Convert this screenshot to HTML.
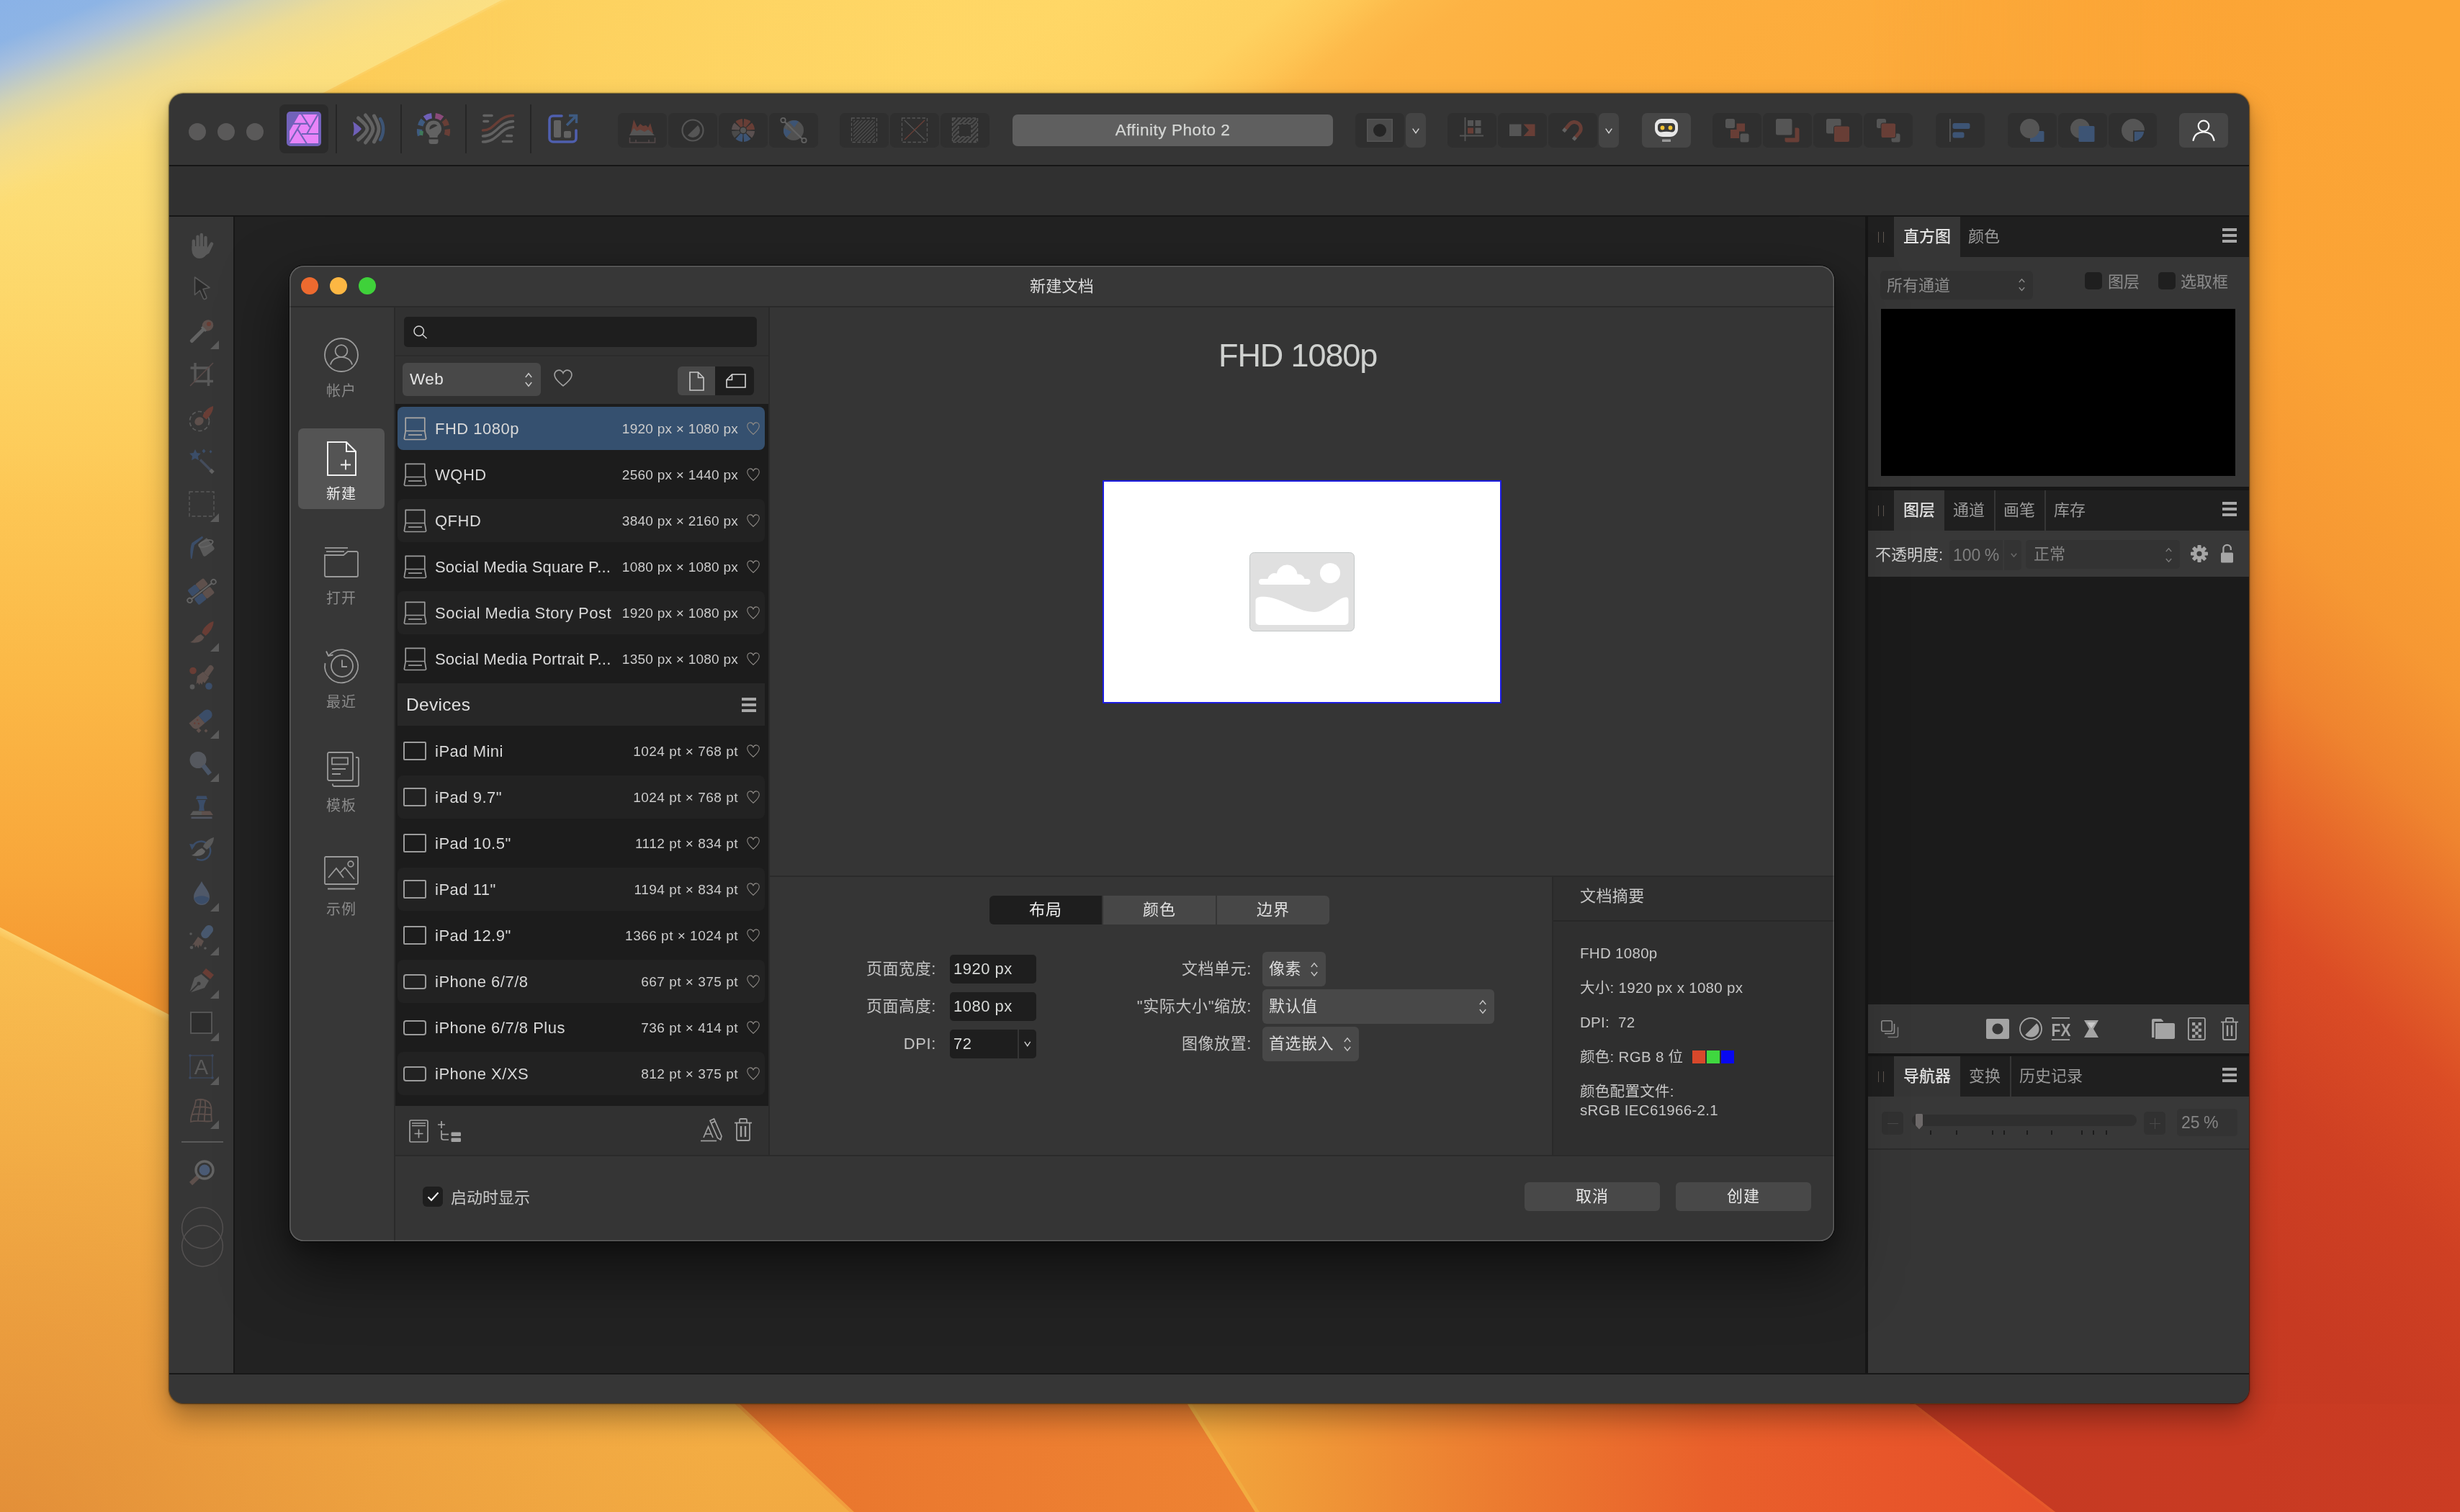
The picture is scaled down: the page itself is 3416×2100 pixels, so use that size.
<!DOCTYPE html>
<html lang="zh-CN"><head><meta charset="utf-8"><title>Affinity Photo 2 - 新建文档</title>
<style>
*{box-sizing:border-box;margin:0;padding:0}
html,body{width:3416px;height:2100px;overflow:hidden;background:#f6a638}
body{position:relative;font-family:"Liberation Sans","Noto Sans CJK SC",sans-serif;color:#ddd;-webkit-font-smoothing:antialiased}
.a{position:absolute}
.t{position:absolute;white-space:nowrap;line-height:1}
#root{position:absolute;left:0;top:0;width:3416px;height:2100px;will-change:transform;transform:translateZ(0)}
svg{position:absolute;overflow:visible}
.cj{font-family:"Liberation Sans","Noto Sans CJK SC",sans-serif}

#win{position:absolute;left:235px;top:130px;width:2888px;height:1819px;border-radius:20px;overflow:hidden;background:#353535}
#winsh{position:absolute;left:235px;top:130px;width:2888px;height:1819px;border-radius:20px;
 box-shadow:0 0 1.5px .5px rgba(0,0,0,.55),0 20px 38px 0 rgba(0,0,0,.33),0 3px 10px rgba(0,0,0,.16)}
#pg{position:absolute;left:-235px;top:-130px;width:3416px;height:2100px}
.tb{position:absolute;top:157px;height:48px;width:68px;background:#2f2f2f;border-radius:7px}

.tbd{position:absolute;top:157px;height:48px;width:28px;background:#444444;border-radius:7px}
.vsep{position:absolute;top:145px;width:2px;height:68px;background:#262626}

#dlgsh{position:absolute;left:402px;top:369px;width:2145px;height:1355px;border-radius:20px;
 box-shadow:0 0 0 1px rgba(0,0,0,.7),0 38px 84px 6px rgba(0,0,0,.5),0 10px 26px rgba(0,0,0,.26)}
#dlg{position:absolute;left:402px;top:369px;width:2145px;height:1355px;border-radius:20px;overflow:hidden;background:#353535}
#dpg{position:absolute;left:-402px;top:-369px;width:3416px;height:2100px}
#dlgbd{position:absolute;left:402px;top:369px;width:2145px;height:1355px;border-radius:20px;box-shadow:inset 0 0 0 1.5px rgba(255,255,255,.2);pointer-events:none}
.row{position:absolute;left:552px;width:510px;height:60px;border-radius:8px}
.rowalt{background:#222222}
.rl{position:absolute;left:604px;font-size:22px;letter-spacing:.5px;color:#d9d9d9;white-space:nowrap;line-height:61px;height:60px}
.rd{position:absolute;right:2391px;font-size:19px;letter-spacing:.25px;color:#cccccc;white-space:nowrap;line-height:61px;height:60px;text-align:right}
.sbl{position:absolute;left:414px;width:120px;text-align:center;font-size:20px;color:#8a8a8a;line-height:30px;height:30px;letter-spacing:1px}
.fl{position:absolute;font-size:22px;color:#c4c4c4;white-space:nowrap;text-align:right;line-height:40px;height:40px;letter-spacing:.6px}
.inp{position:absolute;left:1319px;width:120px;height:40px;border-radius:5px;background:#1e1e1e}
.it{position:absolute;left:1324px;font-size:22px;letter-spacing:.5px;color:#d9dbd9;white-space:nowrap;line-height:40px;height:40px}
.dd{position:absolute;left:1753px;height:48px;border-radius:6px;background:#484848}
.ddt{position:absolute;left:1762px;font-size:22px;color:#dcdcdc;white-space:nowrap;line-height:48px;height:48px;letter-spacing:.5px}
.seg{position:absolute;top:1244px;width:156px;height:40px;line-height:40px;text-align:center;font-size:22px;color:#e0e0e0;letter-spacing:1px}
.sm{position:absolute;left:2194px;font-size:20.5px;color:#c6c6c6;white-space:nowrap;line-height:28px;height:28px;letter-spacing:.3px}
.btn{position:absolute;top:1642px;width:188px;height:40px;border-radius:6px;background:#484848;text-align:center;line-height:40px;font-size:22px;color:#e6e6e6;letter-spacing:1px}

.rp{position:absolute;left:2594px;width:529px}
.rtab{position:absolute;height:56px;line-height:56px;font-size:22px;color:#9a9a9a;white-space:nowrap}
.rtabA{background:#363636;color:#e6e6e6;font-weight:500;text-align:center;color:#e2e2e2}
.ham{position:absolute;width:20px;height:20px}
.ham i{position:absolute;left:0;width:20px;height:4px;background:#a8a8a8}
.grip{position:absolute;width:8px;height:15px;margin-top:5px;border-left:1.5px solid #5e5650;border-right:1.5px solid #5e5650}
.g22{position:absolute;font-size:22px;color:#8c8c8c;white-space:nowrap;line-height:40px;height:40px}
.tsep{position:absolute;width:2px;height:56px;background:#363636}
</style></head>
<body>
<div id="root">

<svg class="a" style="left:0;top:0" width="3416" height="2100" viewBox="0 0 3416 2100">
<defs>
 <linearGradient id="wTop" x1="0" y1="65" x2="1348" y2="1735" gradientUnits="userSpaceOnUse">
  <stop offset="0" stop-color="#fbdd78"/><stop offset="0.117" stop-color="#fdd96a"/>
  <stop offset="0.41" stop-color="#ffd766"/><stop offset="0.50" stop-color="#fed160"/>
  <stop offset="0.527" stop-color="#fec655"/><stop offset="0.547" stop-color="#fdba4a"/>
  <stop offset="0.574" stop-color="#fdb344"/><stop offset="0.66" stop-color="#fdae3e"/>
  <stop offset="0.82" stop-color="#fcaa3a"/><stop offset="1" stop-color="#fca636"/>
 </linearGradient>
 <linearGradient id="wLeft" x1="0" y1="0" x2="0" y2="2100" gradientUnits="userSpaceOnUse">
  <stop offset="0" stop-color="#fdda6c"/><stop offset="0.14" stop-color="#fdd868"/>
  <stop offset="0.30" stop-color="#fdca58"/><stop offset="0.45" stop-color="#fbb846"/>
  <stop offset="0.58" stop-color="#f8a63a"/><stop offset="0.66" stop-color="#f4962f"/>
  <stop offset="1" stop-color="#f3952e"/>
 </linearGradient>
 <linearGradient id="wLeftFade" x1="0" y1="0" x2="700" y2="0" gradientUnits="userSpaceOnUse">
  <stop offset="0" stop-color="#fff" stop-opacity="1"/><stop offset="0.5" stop-color="#fff" stop-opacity="1"/>
  <stop offset="1" stop-color="#fff" stop-opacity="0"/>
 </linearGradient>
 <mask id="mLeft"><rect x="0" y="0" width="700" height="2100" fill="url(#wLeftFade)"/></mask>
 <linearGradient id="wRight" x1="4222" y1="368" x2="2794" y2="1901" gradientUnits="userSpaceOnUse">
  <stop offset="0" stop-color="#fca636"/><stop offset="0.178" stop-color="#fca636"/><stop offset="0.36" stop-color="#fba335"/>
  <stop offset="0.47" stop-color="#f69833"/><stop offset="0.543" stop-color="#ef842f"/>
  <stop offset="0.601" stop-color="#e6682a"/><stop offset="0.667" stop-color="#db4c25"/>
  <stop offset="0.747" stop-color="#cf4023"/><stop offset="0.849" stop-color="#c73a22"/>
  <stop offset="1" stop-color="#c63922"/>
 </linearGradient>
 <linearGradient id="wRightFade" x1="2600" y1="0" x2="3100" y2="0" gradientUnits="userSpaceOnUse">
  <stop offset="0" stop-color="#fff" stop-opacity="0"/><stop offset="1" stop-color="#fff" stop-opacity="1"/>
 </linearGradient>
 <mask id="mRight"><rect x="2600" y="0" width="816" height="2100" fill="url(#wRightFade)"/></mask>
 <linearGradient id="wBlue" x1="0" y1="0" x2="101" y2="251" gradientUnits="userSpaceOnUse">
  <stop offset="0" stop-color="#8ab2e7"/><stop offset="0.2" stop-color="#8db4e5"/>
  <stop offset="0.33" stop-color="#a9c0dc"/><stop offset="0.5" stop-color="#d3d3b2"/>
  <stop offset="0.65" stop-color="#ecdb96" stop-opacity="0.95"/><stop offset="0.85" stop-color="#f8de86" stop-opacity="0.7"/>
  <stop offset="1" stop-color="#fbdf7e" stop-opacity="0"/>
 </linearGradient>
 <linearGradient id="wGold" x1="450" y1="0" x2="1500" y2="0" gradientUnits="userSpaceOnUse">
  <stop offset="0" stop-color="#fbbd44" stop-opacity="0.5"/><stop offset="0.5" stop-color="#fcc650" stop-opacity="0.25"/><stop offset="1" stop-color="#fdd060" stop-opacity="0"/>
 </linearGradient>
 <linearGradient id="wPale" x1="0" y1="0" x2="0" y2="700" gradientUnits="userSpaceOnUse">
  <stop offset="0" stop-color="#fbe085"/><stop offset="0.3" stop-color="#fcdf7c" stop-opacity="0.8"/><stop offset="1" stop-color="#fdd666" stop-opacity="0"/>
 </linearGradient>
 <linearGradient id="pEdge" x1="0" y1="1288" x2="-6" y2="1300" gradientUnits="userSpaceOnUse"><stop offset="0" stop-color="#fdd87a" stop-opacity="0.75"/><stop offset="1" stop-color="#fdd87a" stop-opacity="0"/></linearGradient>
 <linearGradient id="pA" x1="0" y1="1300" x2="0" y2="2100" gradientUnits="userSpaceOnUse">
  <stop offset="0" stop-color="#fcc555"/><stop offset="0.35" stop-color="#fabc4c"/>
  <stop offset="0.7" stop-color="#f5b045"/><stop offset="1" stop-color="#f2aa42"/>
 </linearGradient>
 <radialGradient id="pDark" cx="0" cy="2150" r="1000" gradientUnits="userSpaceOnUse"><stop offset="0" stop-color="#dd8434" stop-opacity="0.75"/><stop offset="0.45" stop-color="#e28c38" stop-opacity="0.4"/><stop offset="1" stop-color="#e8963c" stop-opacity="0"/></radialGradient>
 <linearGradient id="pB" x1="0" y1="0" x2="1200" y2="0" gradientUnits="userSpaceOnUse">
  <stop offset="0" stop-color="#e9993c"/><stop offset="0.25" stop-color="#f0a03c"/>
  <stop offset="0.7" stop-color="#f3aa40"/><stop offset="1" stop-color="#f0a83e"/>
 </linearGradient>
 <linearGradient id="pC" x1="1020" y1="0" x2="1750" y2="0" gradientUnits="userSpaceOnUse">
  <stop offset="0" stop-color="#e8742c"/><stop offset="0.5" stop-color="#ec7c30"/><stop offset="1" stop-color="#ee8332"/>
 </linearGradient>
 <linearGradient id="pD" x1="1650" y1="0" x2="2860" y2="0" gradientUnits="userSpaceOnUse">
  <stop offset="0" stop-color="#f2a83e"/><stop offset="0.12" stop-color="#f09a38"/>
  <stop offset="0.35" stop-color="#ec7c30"/><stop offset="0.6" stop-color="#e9602b"/>
  <stop offset="0.8" stop-color="#e8562a"/><stop offset="1" stop-color="#e4502a"/>
 </linearGradient>
 <linearGradient id="pE" x1="2650" y1="0" x2="3416" y2="0" gradientUnits="userSpaceOnUse">
  <stop offset="0" stop-color="#c53a23"/><stop offset="0.6" stop-color="#c83a22"/><stop offset="1" stop-color="#cb3c23"/>
 </linearGradient>
</defs>
<rect x="0" y="0" width="3416" height="2100" fill="url(#wTop)"/>
<rect x="0" y="0" width="700" height="2100" fill="url(#wLeft)" mask="url(#mLeft)"/>
<rect x="2600" y="0" width="816" height="2100" fill="url(#wRight)" mask="url(#mRight)"/>
<polygon points="0,0 697,0 449,129 235,240 235,700 0,700" fill="url(#wPale)"/>
<polygon points="697,0 703,0 455,129 449,129" fill="#fde48c" opacity="0.55"/>
<polygon points="697,0 449,129 1500,129 1500,0" fill="url(#wGold)"/>
<polygon points="0,0 950,0 0,440" fill="url(#wBlue)"/>
<!-- lower-left petal -->
<polygon points="0,1288 240,1412 700,1690 1021,1950 1180,2100 0,2100" fill="url(#pA)"/>
<polygon points="0,1288 240,1412 700,1690 1021,1950 1180,2100 0,2100" fill="url(#pDark)"/>
<polygon points="0,1288 240,1412 240,1424 0,1300" fill="url(#pEdge)"/>
<!-- bottom petals -->
<polygon points="1021,1950 1649,1950 1743,2100 1180,2100" fill="url(#pC)"/>
<polygon points="1021,1950 1027,1950 1186,2100 1180,2100" fill="#f7c24e" opacity="0.5"/>
<polygon points="1649,1950 2659,1950 2854,2100 1743,2100" fill="url(#pD)"/>
<polygon points="1649,1950 1655,1950 1749,2100 1743,2100" fill="#f4b848" opacity="0.5"/>
<polygon points="2659,1950 3416,1950 3416,2100 2854,2100" fill="url(#pE)"/>
<polygon points="2400,1750 2659,1950 2854,2100 2848,2100 2653,1950" fill="#e8602c" opacity="0.5"/>
</svg>
<div id="winsh"></div>
<div id="win"><div id="pg">

<div class="a" style="left:235px;top:130px;width:2888px;height:100px;background:#353535"></div>
<div class="a" style="left:235px;top:229px;width:2888px;height:2px;background:#161616"></div>
<div class="a" style="left:235px;top:231px;width:2888px;height:69px;background:#303030"></div>
<div class="a" style="left:235px;top:299px;width:2888px;height:2px;background:#161616"></div>
<div class="a" style="left:235px;top:301px;width:89px;height:1606px;background:#363636"></div>
<div class="a" style="left:324px;top:301px;width:2px;height:1606px;background:#181818"></div>
<div class="a" style="left:326px;top:301px;width:2264px;height:1606px;background:#222222"></div>
<div class="a" style="left:2590px;top:301px;width:4px;height:1606px;background:#161616"></div>
<div class="a" style="left:235px;top:1907px;width:2888px;height:2px;background:#181818"></div>
<div class="a" style="left:235px;top:1909px;width:2888px;height:40px;background:#363636"></div>
<div class="a" style="left:262px;top:171px;width:24px;height:24px;border-radius:50%;background:#5a5959"></div>
<div class="a" style="left:302px;top:171px;width:24px;height:24px;border-radius:50%;background:#5a5959"></div>
<div class="a" style="left:342px;top:171px;width:24px;height:24px;border-radius:50%;background:#5a5959"></div>
<div class="a" style="left:388px;top:145px;width:68px;height:68px;border-radius:8px;background:#2b2b2b"></div>
<div class="vsep" style="left:466px"></div>
<div class="vsep" style="left:556px"></div>
<div class="vsep" style="left:646px"></div>
<div class="vsep" style="left:736px"></div>
<svg style="left:398.0px;top:155.0px" width="48" height="48" viewBox="0 0 48 48"><rect width="48" height="48" rx="5" fill="#7262ba"/>
<path d="M17.300 4 H44 V44 H4 V27 Z" fill="#e884f8"/>
<g stroke="#7262ba" stroke-width="2.100" fill="none"><path d="M20.600 3.500 L32.300 21.600"/><path d="M44 3.200 L28.400 30.500"/><path d="M21 31 H44.500"/><path d="M7 16.900 H28.600"/><path d="M19.600 16.500 L3.600 43.200"/><path d="M15.300 24.600 L28.200 45"/></g></svg>
<svg style="left:488.0px;top:155.0px" width="48" height="48" viewBox="0 0 48 48"><path d="M2 14 C8 18 12 21 14 24 C12 27 8 30 2 34 C4 27 4 21 2 14Z" fill="#6f60b8"/>
<g fill="none" stroke="#626262" stroke-width="5" stroke-linecap="round"><path d="M9.500 9 C17 15 22 20 22 24 C22 28 17 33 9.500 39"/><path d="M19.500 5 C26 13 30 19 30 24 C30 29 26 35 19.500 43"/><path d="M31.500 6 C36 14 38 19 38 24 C38 29 36 34 31.500 42"/></g>
<path d="M40 10 C45.500 18 45.500 30 40 39" fill="none" stroke="#3d5474" stroke-width="4.500" stroke-linecap="round"/></svg>
<svg style="left:578.0px;top:155.0px" width="48" height="48" viewBox="0 0 48 48"><g fill="none" stroke-width="7.500">
<path d="M5.500 31 A19.500 19.500 0 0 1 4.700 22.500" stroke="#3e5a80" transform="translate(0,2)"/>
<path d="M5.700 19.500 A19.500 19.500 0 0 1 9.500 12" stroke="#3e5a80"/>
<path d="M12 9.500 A19.500 19.500 0 0 1 21.500 5.700" stroke="#6f60b8"/>
<path d="M26.500 5.700 A19.500 19.500 0 0 1 36 9.500" stroke="#8a4a7a"/>
<path d="M38.500 12 A19.500 19.500 0 0 1 42.300 19.500" stroke="#683e36"/>
<path d="M43.300 24.500 A19.500 19.500 0 0 1 42.500 33" stroke="#683e36"/></g>
<path d="M5 26 l5 1.500 l-1 6 l-4.500 -1.500Z" fill="#3f7a5a"/>
<path d="M24 12.500 a11 11 0 0 1 7.500 19 c-1.500 1.500 -2 2.500 -2 4.500 h-11 c0 -2 -0.500 -3 -2 -4.500 a11 11 0 0 1 7.500 -19Z" fill="#626262"/>
<path d="M17.500 38.500 h13 v3 a3.500 3.500 0 0 1 -3.500 3.500 h-6 a3.500 3.500 0 0 1 -3.500 -3.500Z" fill="#626262"/>
<path d="M18.500 25 A6.500 6.500 0 0 1 29.500 19.500 Z" fill="#353535"/></svg>
<svg style="left:668.0px;top:155.0px" width="48" height="48" viewBox="0 0 48 48"><g fill="none" stroke-linecap="round" stroke-width="3.600">
<path d="M4 5.500 H15" stroke="#626262"/><path d="M4 13.500 H9.500" stroke="#626262"/>
<path d="M2.500 26 C20 26 22 6 44.500 5.500" stroke="#683e36"/>
<path d="M2.500 34 C22 34 24 14 44.500 13.500" stroke="#626262"/>
<path d="M2.500 42 C24 42 26 22 44.500 21.500" stroke="#626262"/>
<path d="M36 33.500 H42.500" stroke="#626262"/><path d="M30.500 41.500 H42.500" stroke="#626262"/></g></svg>
<svg style="left:758.0px;top:155.0px" width="48" height="48" viewBox="0 0 48 48"><path d="M22 6 H10 a5 5 0 0 0 -5 5 V37 a5 5 0 0 0 5 5 H37 a5 5 0 0 0 5 -5 V26" fill="none" stroke="#4f5fae" stroke-width="3.600" stroke-linecap="round"/>
<rect x="11" y="12" width="10" height="24" rx="2" fill="#626262"/><rect x="25" y="27" width="10" height="9.500" rx="2" fill="#626262"/>
<path d="M29 19 L41 7 M32 5.500 H42.500 V16" fill="none" stroke="#3e5a80" stroke-width="3.400"/></svg>
<div class="tb tbl" style="left:858px;width:68px"></div>
<div class="tb tbm" style="left:928px;width:68px"></div>
<div class="tb tbm" style="left:998px;width:68px"></div>
<div class="tb tbr" style="left:1068px;width:68px"></div>
<div class="tb tbl" style="left:1166px;width:68px"></div>
<div class="tb tbm" style="left:1236px;width:68px"></div>
<div class="tb tbr" style="left:1306px;width:68px"></div>
<div class="a" style="left:1406px;top:159px;width:445px;height:44px;border-radius:7px;background:#5f5f5f"></div>
<div class="t" style="left:1406px;top:159px;width:445px;height:44px;line-height:43px;text-align:center;font-size:22.500px;color:#d4d6d4;letter-spacing:0.55px;-webkit-text-stroke:0.25px #d4d6d4">Affinity Photo 2</div>
<div class="tb tbl" style="left:1882px;width:68px"></div>
<div class="tbd" style="left:1952px"></div>
<div class="tb tbl" style="left:2010px;width:68px"></div>
<div class="tb tbm" style="left:2080px;width:68px"></div>
<div class="tb tbm" style="left:2150px;width:68px"></div>
<div class="tbd" style="left:2220px"></div>
<div class="tb " style="left:2280px;width:68px;background:#464646"></div>
<div class="tb tbl" style="left:2378px;width:68px"></div>
<div class="tb tbm" style="left:2448px;width:68px"></div>
<div class="tb tbm" style="left:2518px;width:68px"></div>
<div class="tb tbr" style="left:2588px;width:68px"></div>
<div class="tb " style="left:2688px;width:68px"></div>
<div class="tb tbl" style="left:2788px;width:68px"></div>
<div class="tb tbm" style="left:2858px;width:68px"></div>
<div class="tb tbr" style="left:2928px;width:67px"></div>
<div class="tb " style="left:3026px;width:68px;background:#464646"></div>
<svg style="left:873.0px;top:163.0px" width="38" height="36" viewBox="0 0 38 36"><path d="M3 22 L7 3 L12 14 L16 9 L20 12 L24 11 L27 14 L30 8 L34 22Z" fill="#683e36"/>
<path d="M1 25 L7 15 L11 19 L16 17 L22 20 L27 17 L31 20 L36 25Z" fill="#555555"/>
<path d="M1.500 28 V35 H36.500 V28 M10 31 V35 M28 31 V35" fill="none" stroke="#54494a" stroke-width="1.500"/></svg>
<svg style="left:946.0px;top:165.0px" width="32" height="32" viewBox="0 0 32 32"><circle cx="16" cy="16" r="14.500" fill="none" stroke="#555555" stroke-width="2.200"/><path d="M8.900 23.100 A10 10 0 0 0 23.100 8.900 Z" fill="#555555"/></svg>
<svg style="left:1016.0px;top:165.0px" width="32" height="32" viewBox="0 0 32 32"><path d="M16.4 10.5 L17.1 0.0 A16 16 0 0 1 26.5 3.9 L19.6 11.8Z" fill="#683e36"/><path d="M20.2 12.4 L28.1 5.5 A16 16 0 0 1 32.0 14.9 L21.5 15.6Z" fill="#683e36"/><path d="M21.5 16.4 L32.0 17.1 A16 16 0 0 1 28.1 26.5 L20.2 19.6Z" fill="#5a5050"/><path d="M19.6 20.2 L26.5 28.1 A16 16 0 0 1 17.1 32.0 L16.4 21.5Z" fill="#3d5474"/><path d="M15.6 21.5 L14.9 32.0 A16 16 0 0 1 5.5 28.1 L12.4 20.2Z" fill="#3d5474"/><path d="M11.8 19.6 L3.9 26.5 A16 16 0 0 1 0.0 17.1 L10.5 16.4Z" fill="#4a4a4a"/><path d="M10.5 15.6 L0.0 14.9 A16 16 0 0 1 3.9 5.5 L11.8 12.4Z" fill="#5a5050"/><path d="M12.4 11.8 L5.5 3.9 A16 16 0 0 1 14.9 0.0 L15.6 10.5Z" fill="#683e36"/><circle cx="16" cy="16" r="4" fill="#555555"/></svg>
<svg style="left:1083.0px;top:163.0px" width="38" height="36" viewBox="0 0 38 36"><path d="M9.500 26.500 A14 14 0 0 1 9 8 Z" fill="#3d5474" transform="translate(1,0)"/>
<circle cx="19" cy="18" r="14" fill="#555555" opacity="0.900"/><path d="M13 6.500 A14 14 0 0 1 26 5.500 L20 14Z" fill="#3d5474"/><path d="M5.500 15 A14 14 0 0 0 9 28 L16 20Z" fill="#3d5474"/>
<path d="M5 4.500 L33 32" stroke="#626262" stroke-width="2.400"/><circle cx="4.500" cy="4" r="3.200" fill="#2f2f2f" stroke="#626262" stroke-width="1.800"/><circle cx="33.500" cy="32" r="3.200" fill="#2f2f2f" stroke="#626262" stroke-width="1.800"/></svg>
<svg style="left:1181.0px;top:163.0px" width="38" height="36" viewBox="0 0 38 36"><defs><clipPath id="c5"><rect x="4" y="3" width="30" height="30"/></clipPath></defs><g clip-path="url(#c5)" stroke="#4c4c4c" stroke-width="1.400"><path d="M-24 34 L6 4" /><path d="M-19 34 L11 4" /><path d="M-14 34 L16 4" /><path d="M-9 34 L21 4" /><path d="M-4 34 L26 4" /><path d="M1 34 L31 4" /><path d="M6 34 L36 4" /><path d="M11 34 L41 4" /><path d="M16 34 L46 4" /><path d="M21 34 L51 4" /><path d="M26 34 L56 4" /><path d="M31 34 L61 4" /></g><rect x="1.500" y="1" width="35" height="33.500" fill="none" stroke="#555555" stroke-width="1.300" stroke-dasharray="4.500 2.500"/></svg>
<svg style="left:1251.0px;top:163.0px" width="38" height="36" viewBox="0 0 38 36"><rect x="1.500" y="1" width="35" height="33.500" fill="none" stroke="#555555" stroke-width="1.300" stroke-dasharray="4.500 2.500"/><path d="M5 4 L33 31" stroke="#555555" stroke-width="1.300"/><path d="M33 4 L5 31" stroke="#6a4038" stroke-width="1.300"/></svg>
<svg style="left:1321.0px;top:163.0px" width="38" height="36" viewBox="0 0 38 36"><defs><clipPath id="c7"><path d="M2 1.500 H36 V34 H2Z M10 9 V27 H28 V9Z" clip-rule="evenodd"/></clipPath></defs><g clip-path="url(#c7)" stroke="#4c4c4c" stroke-width="2.400"><path d='M-30 36 L6 0'/><path d='M-24 36 L12 0'/><path d='M-18 36 L18 0'/><path d='M-12 36 L24 0'/><path d='M-6 36 L30 0'/><path d='M0 36 L36 0'/><path d='M6 36 L42 0'/><path d='M12 36 L48 0'/><path d='M18 36 L54 0'/><path d='M24 36 L60 0'/><path d='M30 36 L66 0'/><path d='M36 36 L72 0'/></g><rect x="1.500" y="1" width="35" height="33.500" fill="none" stroke="#555555" stroke-width="1.300" stroke-dasharray="4.500 2.500"/><rect x="10" y="9" width="18" height="18" fill="#2f2f2f" stroke="#555555" stroke-width="1.300" stroke-dasharray="4 2.500"/></svg>
<svg style="left:1898.0px;top:165.0px" width="36" height="32" viewBox="0 0 36 32"><rect x="0.750" y="0.750" width="34.500" height="30.500" fill="#4a4a4a" stroke="#555555" stroke-width="1.500"/><circle cx="18" cy="16" r="9" fill="#252525"/></svg>
<svg style="left:1961.0px;top:178.25px" width="10" height="7.5" viewBox="0 0 10 7.5"><path d="M0.700 0.700 L5 6.700 L9.300 0.700" fill="none" stroke="#d4d4d4" stroke-width="1.400"/></svg>
<svg style="left:2229.0px;top:178.25px" width="10" height="7.5" viewBox="0 0 10 7.5"><path d="M0.700 0.700 L5 6.700 L9.300 0.700" fill="none" stroke="#d4d4d4" stroke-width="1.400"/></svg>
<svg style="left:2027.0px;top:163.0px" width="34" height="34" viewBox="0 0 34 34"><path d="M7.500 0 V33 M0 25.500 H33" stroke="#555555" stroke-width="1.800" fill="none"/><rect x="11" y="4" width="8" height="8" fill="#555555"/><rect x="21.500" y="4" width="8" height="8" fill="#555555"/><rect x="11" y="14.500" width="8" height="8" fill="#683e36"/><rect x="21.500" y="14.500" width="8" height="8" fill="#555555"/></svg>
<svg style="left:2096.0px;top:172.0px" width="36" height="18" viewBox="0 0 36 18"><rect x="0" y="0.500" width="16.500" height="16.500" fill="#555555"/><path d="M19.500 0.500 H35.500 V17 H19.500 L27 8.750Z" fill="#683e36"/></svg>
<svg style="left:2170.5px;top:166.5px" width="27" height="27" viewBox="0 0 30 30"><g transform="rotate(40 15 15)"><path d="M5 24 V12 a10 10 0 0 1 20 0 V24" fill="none" stroke="#683e36" stroke-width="5.500"/><rect x="2.250" y="21" width="5.500" height="5.500" fill="#626262"/><rect x="22.250" y="21" width="5.500" height="5.500" fill="#626262"/></g></svg>
<svg style="left:2297.0px;top:164.0px" width="34" height="34" viewBox="0 0 34 34"><path d="M10 1 H24 a9 9 0 0 1 9 9 V15 a11 11 0 0 1 -11 11 H12 a11 11 0 0 1 -11 -11 V10 a9 9 0 0 1 9 -9Z" fill="#e6e6e6"/>
<path d="M9.500 7 H24.500 a4.500 4.500 0 0 1 4.500 4.500 V15 a4.500 4.500 0 0 1 -4.500 4.500 C20 18.500 14 18.500 9.500 19.500 a4.500 4.500 0 0 1 -4.500 -4.500 V11.500 a4.500 4.500 0 0 1 4.500 -4.500Z" fill="#3a3a3a"/>
<circle cx="11.500" cy="13.500" r="2.900" fill="#f1c232"/><circle cx="22.500" cy="13.500" r="2.900" fill="#f1c232"/><rect x="11" y="29.500" width="12" height="3.500" rx="0.500" fill="#9a9a9a"/></svg>
<svg style="left:2395.0px;top:164.0px" width="34" height="34" viewBox="0 0 34 34"><rect x="1" y="1" width="13" height="13" rx="2.500" fill="#555555"/><path d="M16.500 7.500 H28 V18.500 H20 V28 H8 V16 H16.500Z" fill="#683e36" /><rect x="21.500" y="21.500" width="12" height="12" rx="2.500" fill="#555555"/></svg>
<svg style="left:2465.0px;top:164.0px" width="34" height="34" viewBox="0 0 34 34"><rect x="1" y="1" width="22.500" height="22.500" rx="2.500" fill="#555555"/><path d="M27.500 13.500 H31 a2.500 2.500 0 0 1 2.500 2.500 V31 a2.500 2.500 0 0 1 -2.500 2.500 H16 a2.500 2.500 0 0 1 -2.500 -2.500 V27.500 H27.500Z" fill="#683e36"/></svg>
<svg style="left:2535.0px;top:164.0px" width="34" height="34" viewBox="0 0 34 34"><rect x="1" y="1" width="20.500" height="20.500" rx="2.500" fill="#555555"/><rect x="11.500" y="11" width="22" height="22.500" rx="2.500" fill="#683e36" stroke="#2f2f2f" stroke-width="1"/></svg>
<svg style="left:2605.0px;top:164.0px" width="34" height="34" viewBox="0 0 34 34"><rect x="1" y="1" width="13" height="13" rx="2.500" fill="#555555"/><rect x="21.500" y="21.500" width="12" height="12" rx="2.500" fill="#555555"/><rect x="7" y="7" width="20.500" height="20.500" rx="2.500" fill="#683e36" stroke="#2f2f2f" stroke-width="1"/></svg>
<svg style="left:2707.0px;top:164.0px" width="30" height="34" viewBox="0 0 30 34"><rect x="0" y="1" width="1.800" height="32" fill="#555555"/><rect x="4.500" y="7" width="24" height="8" rx="2.500" fill="#3d5474"/><rect x="4.500" y="19.500" width="16" height="8" rx="2.500" fill="#3d5474"/></svg>
<svg style="left:2804.0px;top:164.0px" width="36" height="34" viewBox="0 0 36 34"><path d="M24 18 H33 a1.500 1.500 0 0 1 1.500 1.500 V31.500 a1.500 1.500 0 0 1 -1.500 1.500 H15 V26Z" fill="#3d5474"/><circle cx="14.500" cy="14.500" r="13.500" fill="#555555"/></svg>
<svg style="left:2874.0px;top:164.0px" width="36" height="34" viewBox="0 0 36 34"><circle cx="14.500" cy="14.500" r="13.500" fill="#555555"/><rect x="12.500" y="11" width="22" height="22" rx="1.500" fill="#3d5474"/></svg>
<svg style="left:2945.0px;top:164.0px" width="34" height="34" viewBox="0 0 34 34"><circle cx="17" cy="17" r="16" fill="#555555"/><path d="M18 18 H33 A16 16 0 0 1 18 33Z" fill="#3d5474" stroke="#2f2f2f" stroke-width="1.600"/></svg>
<svg style="left:3044.0px;top:166.0px" width="32" height="30" viewBox="0 0 32 30"><circle cx="16" cy="9" r="7.300" fill="none" stroke="#f4f4f4" stroke-width="2.200"/><path d="M1.500 29 C3 20.500 9 17.500 16 17.500 C23 17.500 29 20.500 30.500 29" fill="none" stroke="#f4f4f4" stroke-width="2.200" stroke-linecap="round"/></svg>
<svg style="left:262.0px;top:323.0px" width="36" height="36" viewBox="0 0 36 36"><g fill="#595959"><rect x="4.600" y="9.500" width="4.400" height="17" rx="2.200"/><rect x="10.300" y="3.600" width="4.400" height="20" rx="2.200"/><rect x="15.600" y="0.700" width="4.400" height="22" rx="2.200"/><rect x="21.300" y="4.800" width="4.400" height="20" rx="2.200"/><path d="M4.600 19 H25.700 V24 C25.700 32 21 36 15 36 C9 36 4.600 31 4.600 25Z"/><path d="M25 22.500 L30 14.500 a2.300 2.300 0 0 1 4 2.300 L28.500 28.500 L23 32Z"/></g></svg>
<svg style="left:262.0px;top:382.0px" width="36" height="36" viewBox="0 0 36 36"><path d="M8.500 3 L29 17.500 L20 19.500 L24.500 30 a2 2 0 0 1 -4.500 2 L15.500 21.500 L8.500 27.500Z" fill="#2a2a2a" stroke="#595959" stroke-width="1.600" stroke-linejoin="round"/></svg>
<svg style="left:262.0px;top:442.0px" width="36" height="36" viewBox="0 0 36 36"><path d="M2.500 33 a2.200 2.200 0 0 1 0 -3.200 L19 13.500 L22.500 17 L6 33.500 a2.200 2.200 0 0 1 -3.500 -0.500Z" fill="#636363"/><ellipse cx="26.500" cy="10" rx="8" ry="7.500" fill="#5e504c" transform="rotate(-40 26.500 10)"/><circle cx="28" cy="8" r="3" fill="#693d35"/><path d="M18 12 L24 18" stroke="#636363" stroke-width="3"/></svg>
<svg style="left:292px;top:473px" width="12" height="12" viewBox="0 0 12 12"><path d="M12 0 V12 H0Z" fill="#5c5c5c"/></svg>
<svg style="left:262.0px;top:502.0px" width="36" height="36" viewBox="0 0 36 36"><path d="M9 2 V27.500 H34 M2.500 9 H27.500 V34" fill="none" stroke="#595959" stroke-width="3.400"/><path d="M2 34 L34 2" stroke="#5a4a48" stroke-width="1.500"/></svg>
<svg style="left:262.0px;top:563.0px" width="36" height="36" viewBox="0 0 36 36"><circle cx="15" cy="22" r="13.500" fill="none" stroke="#595959" stroke-width="1.700" stroke-dasharray="5.500 3.200"/><path d="M19.500 15.500 C20 10 28 2 34 1 C35 7 29 16 24.500 19.500Z" fill="#693d35"/><ellipse cx="14.500" cy="22" rx="6.500" ry="5.500" fill="#5e504c" transform="rotate(-35 14.500 22)"/></svg>
<svg style="left:262.0px;top:623.0px" width="36" height="36" viewBox="0 0 36 36"><path d="M9 1 l2.400 5 l5.500 0.800 l-4 3.900 l1 5.500 l-4.900 -2.600 l-4.900 2.600 l1 -5.500 l-4 -3.900 l5.500 -0.800Z" fill="#3b4d68"/><path d="M21 0.500 l2.500 3 l-2.500 3 l-2.500 -3Z M30.500 2 l2 2.300 l-2 2.300 l-2 -2.300Z" fill="#3b4d68"/><path d="M16 15.500 L30 29.500" stroke="#444c5c" stroke-width="3.400"/><path d="M30 29.500 L34 33.500" stroke="#636363" stroke-width="5"/></svg>
<svg style="left:262.0px;top:682.0px" width="36" height="36" viewBox="0 0 36 36"><rect x="1" y="1" width="34" height="34" fill="none" stroke="#595959" stroke-width="1.400" stroke-dasharray="5 2.800"/></svg>
<svg style="left:292px;top:713px" width="12" height="12" viewBox="0 0 12 12"><path d="M12 0 V12 H0Z" fill="#5c5c5c"/></svg>
<svg style="left:262.0px;top:742.0px" width="36" height="36" viewBox="0 0 36 36"><path d="M3 34 C2 26 2 18 4.500 12 L19 2.500 L20 5 L8 15 C6 22 6 27 4.500 34Z" fill="#3b4d68"/><path d="M13 14 L25 5 L35 18 a3 3 0 0 1 -0.500 4 L24 30 a3 3 0 0 1 -4 -0.500Z" fill="#595959"/><ellipse cx="24" cy="13" rx="10" ry="4" fill="none" stroke="#636363" stroke-width="2" transform="rotate(-18 24 13)"/></svg>
<svg style="left:262.0px;top:803.0px" width="36" height="36" viewBox="0 0 36 36"><g transform="rotate(-38 18 18)"><rect x="3" y="5" width="14" height="11" rx="2" fill="#3b4d68"/><rect x="17" y="5" width="14" height="11" rx="2" fill="#5e504c"/><rect x="3" y="20" width="14" height="11" rx="2" fill="#3b4d68"/><rect x="17" y="20" width="14" height="11" rx="2" fill="#5e504c"/><path d="M-1 18 H37" stroke="#636363" stroke-width="2.200"/><circle cx="-3" cy="18" r="3.200" fill="#363636" stroke="#636363" stroke-width="1.800"/><circle cx="39" cy="18" r="3.200" fill="#363636" stroke="#636363" stroke-width="1.800"/></g></svg>
<svg style="left:262.0px;top:862.0px" width="36" height="36" viewBox="0 0 36 36"><path d="M18.500 17 C19 11 28 2 34.500 1 C35 8 29 17 23.500 21Z" fill="#693d35"/><path d="M17 19 L21.500 23 C19 30 10 32 2 30 C8 28 9 21 17 19Z" fill="#5e504c"/></svg>
<svg style="left:292px;top:893px" width="12" height="12" viewBox="0 0 12 12"><path d="M12 0 V12 H0Z" fill="#5c5c5c"/></svg>
<svg style="left:262.0px;top:922.0px" width="36" height="36" viewBox="0 0 36 36"><circle cx="6" cy="9.500" r="4.800" fill="#693d35"/><circle cx="5" cy="32" r="3.400" fill="#595959"/><circle cx="28" cy="31" r="4.800" fill="#3b4d68"/><path d="M21 12 L28 3 a3 3 0 0 1 4.500 -0.500 l1.500 1.500 a3 3 0 0 1 0 4 L27 18Z" fill="#5e504c"/><path d="M12 17 L20 11 L28 19 L22 27 l-2 -2.500 l-1.500 4.500 l-2.500 -3 l-1 3.500 l-2.500 -3.500 l-2 2.500 Z" fill="#5e504c"/></svg>
<svg style="left:262.0px;top:983.0px" width="36" height="36" viewBox="0 0 36 36"><g transform="rotate(-40 18 16)"><path d="M1 9 H18 V23 H8 a7 7 0 0 1 -7 -7Z" fill="#5e504c"/><path d="M18 9 H28 a7 7 0 0 1 0 14 H18Z" fill="#3b4d68"/><circle cx="7" cy="14" r="1.200" fill="#693d35"/><circle cx="11" cy="18" r="1.200" fill="#693d35"/><circle cx="13" cy="13" r="1.200" fill="#693d35"/></g><path d="M14 28 l3.500 3.500 l-3.500 3.500 l-3.500 -3.500Z M24 29.500 l2.500 2.500 l-2.500 2.500 l-2.500 -2.500Z" fill="#5e504c"/></svg>
<svg style="left:292px;top:1014px" width="12" height="12" viewBox="0 0 12 12"><path d="M12 0 V12 H0Z" fill="#5c5c5c"/></svg>
<svg style="left:262.0px;top:1043.0px" width="36" height="36" viewBox="0 0 36 36"><circle cx="13" cy="12.500" r="11.500" fill="#55585e"/><path d="M20 20 L29.500 32" stroke="#4a5566" stroke-width="6.500"/></svg>
<svg style="left:292px;top:1074px" width="12" height="12" viewBox="0 0 12 12"><path d="M12 0 V12 H0Z" fill="#5c5c5c"/></svg>
<svg style="left:262.0px;top:1102.0px" width="36" height="36" viewBox="0 0 36 36"><path d="M11.500 3.500 H24.500 L26 8 H10Z" fill="#3b4d68"/><path d="M12 9 H24 C22 14 20 17 22 24 H14 C16 17 14 14 12 9Z" fill="#3b4d68"/><path d="M6 24.500 H18 V30 H2 Z" fill="#595959"/><path d="M18 24.500 H30 L34 30 H18Z" fill="#5e504c"/><rect x="3.500" y="32.500" width="29" height="2.600" fill="#505560"/></svg>
<svg style="left:262.0px;top:1162.0px" width="36" height="36" viewBox="0 0 36 36"><path d="M6 14 A13 13 0 1 1 11 32" fill="none" stroke="#3b4d68" stroke-width="2.400" transform="translate(0,-1)"/><path d="M1 10 L9.500 11 L4.500 18.500Z" fill="#3b4d68"/><path d="M20 14 C21 9 29 2 35 1 C35 8 30 15 25 18Z" fill="#595959"/><path d="M18.500 16 L23 20 C21 27 12 28 4 26 C10 24 11 18 18.500 16Z" fill="#636363"/></svg>
<svg style="left:262.0px;top:1223.0px" width="36" height="36" viewBox="0 0 36 36"><path d="M18 1 C22 9 29 15 29 23 a11 11 0 0 1 -22 0 C7 15 14 9 18 1Z" fill="#4f5868"/><path d="M7.500 25 C13 20 23 20 28.500 25 a11 11 0 0 1 -21 0Z" fill="#3b4d68"/></svg>
<svg style="left:292px;top:1254px" width="12" height="12" viewBox="0 0 12 12"><path d="M12 0 V12 H0Z" fill="#5c5c5c"/></svg>
<svg style="left:262.0px;top:1284.0px" width="36" height="36" viewBox="0 0 36 36"><g transform="rotate(38 25 11)"><rect x="19" y="0" width="12" height="20" rx="6" fill="#48586e"/></g><path d="M11 17 L19 23 L15 31 l-2 -3 l-1.500 5 l-2.500 -4 l-2 3 l-1 -4.500 l-3 1.500Z" fill="#5e504c" transform="translate(2,0)"/><circle cx="3" cy="13" r="1.800" fill="#595959"/><circle cx="4" cy="32" r="2.300" fill="#595959"/><circle cx="23" cy="33" r="1.800" fill="#595959"/></svg>
<svg style="left:292px;top:1315px" width="12" height="12" viewBox="0 0 12 12"><path d="M12 0 V12 H0Z" fill="#5c5c5c"/></svg>
<svg style="left:262.0px;top:1344.0px" width="36" height="36" viewBox="0 0 36 36"><path d="M24 1 L35 10 L30 16 L19 7Z" fill="#693d35"/><path d="M17.500 9 L28 18 L22 28 L1 35 L8 14Z" fill="#595959"/><path d="M1 35 L13.500 22.500" stroke="#363636" stroke-width="1.800"/><circle cx="14" cy="22" r="2.500" fill="#363636"/></svg>
<svg style="left:292px;top:1375px" width="12" height="12" viewBox="0 0 12 12"><path d="M12 0 V12 H0Z" fill="#5c5c5c"/></svg>
<svg style="left:262.0px;top:1403.0px" width="36" height="36" viewBox="0 0 36 36"><rect x="3" y="3" width="29" height="29" fill="#2d2d2d" stroke="#595959" stroke-width="1.800"/></svg>
<svg style="left:292px;top:1434px" width="12" height="12" viewBox="0 0 12 12"><path d="M12 0 V12 H0Z" fill="#5c5c5c"/></svg>
<svg style="left:262.0px;top:1464.0px" width="36" height="36" viewBox="0 0 36 36"><rect x="2" y="2" width="31" height="31" fill="none" stroke="#3d4a62" stroke-width="1.200"/><g fill="#3d4a62"><circle cx="2" cy="2" r="1.800"/><circle cx="33" cy="2" r="1.800"/><circle cx="2" cy="33" r="1.800"/><circle cx="33" cy="33" r="1.800"/></g><text x="17.500" y="28" font-family="Liberation Sans,sans-serif" font-size="29" text-anchor="middle" fill="#595959">A</text></svg>
<svg style="left:292px;top:1495px" width="12" height="12" viewBox="0 0 12 12"><path d="M12 0 V12 H0Z" fill="#5c5c5c"/></svg>
<svg style="left:262.0px;top:1525.0px" width="36" height="36" viewBox="0 0 36 36"><path d="M10 3 C16 1 24 2 28 6 C34 12 30 22 32 32 C24 34 12 30 3 33 C2 24 9 14 10 3Z M16.500 2.500 C17 12 13 24 13 32 M22.500 3.500 C25 14 21 24 22 32.500 M8.500 13 C16 11 24 13 31.500 14 M5 23 C14 21 22 23 31 23" fill="none" stroke="#5e504c" stroke-width="1.800"/></svg>
<svg style="left:292px;top:1556px" width="12" height="12" viewBox="0 0 12 12"><path d="M12 0 V12 H0Z" fill="#5c5c5c"/></svg>
<div class="a" style="left:252px;top:1585px;width:58px;height:2px;background:#5a5a5a"></div>
<svg style="left:262.0px;top:1612.0px" width="36" height="40" viewBox="0 0 36 40"><path d="M13.500 22 L3 32" stroke="#5e504c" stroke-width="6"/><circle cx="22" cy="13" r="12" fill="#363636" stroke="#636363" stroke-width="3.400"/><circle cx="22" cy="13" r="7.500" fill="#4a5a74"/></svg>
<svg style="left:250px;top:1675px" width="62" height="86" viewBox="0 0 62 86" fill="none" stroke="#545151" stroke-width="1.500"><circle cx="31" cy="30.500" r="28.400"/><circle cx="31" cy="55.500" r="28.400"/></svg>
<div class="rp" style="top:301px;height:1606px;background:#363636"></div>
<div class="rp" style="top:301px;height:56px;background:#1f1f1f"></div>
<div class="grip" style="left:2608px;top:317px"></div>
<div class="rtab rtabA" style="left:2630px;top:301px;width:92px">直方图</div>
<div class="rtab" style="left:2733px;top:301px">颜色</div>
<div class="ham" style="left:3086px;top:317px"><i style="top:0"></i><i style="top:8px"></i><i style="top:16px"></i></div>
<div class="a" style="left:2611px;top:376px;width:212px;height:40px;border-radius:6px;background:#313131"></div>
<div class="g22" style="left:2620px;top:377px">所有通道</div>
<svg style="left:2802.5px;top:387.4px" width="9" height="17.2" viewBox="0 0 9 17.2" fill="none" stroke="#8a8a8a" stroke-width="1.4"><path d="M0.8 5 L4.5 0.8 L8.2 5"/><path d="M0.8 12.2 L4.5 16.4 L8.2 12.2"/></svg>
<div class="a" style="left:2895px;top:378px;width:24px;height:24px;border-radius:5px;background:#1f1f1f"></div>
<div class="g22" style="left:2927px;top:372px">图层</div>
<div class="a" style="left:2997px;top:378px;width:24px;height:24px;border-radius:5px;background:#1f1f1f"></div>
<div class="g22" style="left:3028px;top:372px">选取框</div>
<div class="a" style="left:2612px;top:429px;width:492px;height:232px;background:#000"></div>
<div class="rp" style="top:676px;height:5px;background:#161616"></div>
<div class="rp" style="top:681px;height:56px;background:#1f1f1f"></div>
<div class="grip" style="left:2608px;top:697px"></div>
<div class="rtab rtabA" style="left:2630px;top:681px;width:70px">图层</div>
<div class="rtab" style="left:2712px;top:681px">通道</div>
<div class="tsep" style="left:2769px;top:681px"></div>
<div class="rtab" style="left:2782px;top:681px">画笔</div>
<div class="tsep" style="left:2839px;top:681px"></div>
<div class="rtab" style="left:2852px;top:681px">库存</div>
<div class="ham" style="left:3086px;top:697px"><i style="top:0"></i><i style="top:8px"></i><i style="top:16px"></i></div>
<div class="rp" style="top:737px;height:64px;background:#383838"></div>
<div class="t" style="left:2604px;top:750px;height:42px;line-height:42px;font-size:22px;color:#d0d0d0">不透明度:</div>
<div class="a" style="left:2707px;top:750px;width:74px;height:42px;border-radius:5px 0 0 5px;background:#333333"></div>
<div class="a" style="left:2783px;top:750px;width:24px;height:42px;border-radius:0 5px 5px 0;background:#333333"></div>
<div class="t" style="left:2712px;top:750px;height:42px;line-height:42px;font-size:23px;color:#7f7f7f;word-spacing:-1px">100 %</div>
<svg style="left:2791.5px;top:768.0px" width="9" height="6" viewBox="0 0 9 6" fill="none" stroke="#6a6a6a" stroke-width="1.5"><path d="M0.8 0.8 L4.5 5.2 L8.2 0.8"/></svg>
<div class="a" style="left:2813px;top:750px;width:214px;height:40px;border-radius:5px;background:#333333"></div>
<div class="g22" style="left:2824px;top:750px;color:#858585">正常</div>
<svg style="left:3006.5px;top:761px" width="9" height="20" viewBox="0 0 9 20" fill="none" stroke="#7a7a7a" stroke-width="1.4"><path d="M0.8 5 L4.5 0.8 L8.2 5"/><path d="M0.8 15 L4.5 19.2 L8.2 15"/></svg>
<svg style="left:3042px;top:757px" width="24" height="24" viewBox="-12 -12 24 24"><g fill="#a6a6a6">
<circle r="8.2"/><rect x="-2.6" y="-12" width="5.2" height="6" rx="1" transform="rotate(0)"/><rect x="-2.6" y="-12" width="5.2" height="6" rx="1" transform="rotate(45)"/><rect x="-2.6" y="-12" width="5.2" height="6" rx="1" transform="rotate(90)"/><rect x="-2.6" y="-12" width="5.2" height="6" rx="1" transform="rotate(135)"/><rect x="-2.6" y="-12" width="5.2" height="6" rx="1" transform="rotate(180)"/><rect x="-2.6" y="-12" width="5.2" height="6" rx="1" transform="rotate(225)"/><rect x="-2.6" y="-12" width="5.2" height="6" rx="1" transform="rotate(270)"/><rect x="-2.6" y="-12" width="5.2" height="6" rx="1" transform="rotate(315)"/></g><circle r="3.6" fill="#383838"/></svg>
<svg style="left:3084px;top:755px" width="18" height="27" viewBox="0 0 18 27"><rect x="0" y="12.5" width="17" height="14" rx="1.5" fill="#a6a6a6"/>
<path d="M3.4 13 V7 a5.2 5.2 0 0 1 10.4 0 V9" fill="none" stroke="#a6a6a6" stroke-width="2.2"/></svg>
<div class="rp" style="top:801px;height:594px;background:#1b1b1b"></div>
<svg style="left:2612px;top:1417px" width="25" height="25" viewBox="0 0 25 25" fill="none" stroke="#8f8f8f" stroke-width="1.6">
<rect x="0.8" y="0.8" width="14.5" height="14.5" rx="2"/><path d="M18.5 5 V16.5 a2 2 0 0 1 -2 2 H5"/><path d="M23.5 9.5 V21.5 a2 2 0 0 1 -2 2 H9.5" stroke="#7a7a7a"/></svg>
<svg style="left:2758px;top:1415px" width="32" height="28" viewBox="0 0 32 28"><rect width="32" height="28" rx="2" fill="#a4a4a4"/><circle cx="16" cy="14" r="7.6" fill="#363636"/></svg>
<svg style="left:2804px;top:1413px" width="32" height="32" viewBox="0 0 32 32"><circle cx="16" cy="16" r="15" fill="none" stroke="#a4a4a4" stroke-width="1.8"/><path d="M8.200 24.200 A11 11 0 0 0 24.200 8.200 Z" fill="#a4a4a4"/></svg>
<svg style="left:2849px;top:1413px" width="26" height="32" viewBox="0 0 26 32"><rect x="0" y="0" width="25" height="1.8" fill="#a4a4a4"/><rect x="0" y="30.2" width="25" height="1.8" fill="#a4a4a4"/>
<text x="-0.5" y="25.5" font-family="Liberation Sans,sans-serif" font-weight="bold" font-size="24" fill="#a4a4a4" textLength="27" lengthAdjust="spacingAndGlyphs">FX</text></svg>
<svg style="left:2894px;top:1417px" width="20" height="24" viewBox="0 0 20 24"><path d="M0 0 H20 L13 12 L20 24 H0 L7 12Z" fill="#a4a4a4"/><path d="M4 3 H16 L10 11Z" fill="#c9c9c9"/></svg>
<svg style="left:2988px;top:1415px" width="32" height="28" viewBox="0 0 32 28"><path d="M0 2 a2 2 0 0 1 2 -2 H13 l3 3 V4 H3.5 V26 H0Z" fill="#a4a4a4"/><path d="M5 6 H30 a2 2 0 0 1 2 2 V26 a2 2 0 0 1 -2 2 H5 Z" fill="#a4a4a4"/></svg>
<svg style="left:3038px;top:1413px" width="25" height="32" viewBox="0 0 25 32"><rect x="0.9" y="0.9" width="23" height="30.2" rx="2" fill="none" stroke="#a4a4a4" stroke-width="1.8"/><rect x="6.0" y="7.0" width="4.3" height="4.3" fill="#a4a4a4"/><rect x="14.6" y="7.0" width="4.3" height="4.3" fill="#a4a4a4"/><rect x="10.3" y="11.3" width="4.3" height="4.3" fill="#a4a4a4"/><rect x="6.0" y="15.6" width="4.3" height="4.3" fill="#a4a4a4"/><rect x="14.6" y="15.6" width="4.3" height="4.3" fill="#a4a4a4"/><rect x="10.3" y="19.9" width="4.3" height="4.3" fill="#a4a4a4"/><rect x="6.0" y="24.2" width="4.3" height="4.3" fill="#a4a4a4"/><rect x="14.6" y="24.2" width="4.3" height="4.3" fill="#a4a4a4"/></svg>
<svg style="left:3084px;top:1413px" width="24" height="32" viewBox="0 0 24 32" fill="none" stroke="#a4a4a4" stroke-width="1.8"><path d="M0 6.5 H24"/><path d="M7 6 V2.5 a1.5 1.5 0 0 1 1.5 -1.5 H15.5 a1.5 1.5 0 0 1 1.5 1.5 V6"/><path d="M3 6.5 V29 a2 2 0 0 0 2 2 H19 a2 2 0 0 0 2 -2 V6.5"/><path d="M9 11 V26 M15 11 V26" stroke-width="2.4"/></svg>
<div class="rp" style="top:1463px;height:4px;background:#161616"></div>
<div class="rp" style="top:1467px;height:56px;background:#1f1f1f"></div>
<div class="grip" style="left:2608px;top:1483px"></div>
<div class="rtab rtabA" style="left:2630px;top:1467px;width:92px">导航器</div>
<div class="rtab" style="left:2734px;top:1467px">变换</div>
<div class="tsep" style="left:2791px;top:1467px"></div>
<div class="rtab" style="left:2804px;top:1467px">历史记录</div>
<div class="ham" style="left:3086px;top:1483px"><i style="top:0"></i><i style="top:8px"></i><i style="top:16px"></i></div>
<div class="rp" style="top:1523px;height:73px;background:#383838"></div>
<div class="rp" style="top:1595px;height:2px;background:#2c2c2c"></div>
<div class="a" style="left:2613px;top:1544px;width:30px;height:32px;border-radius:5px;background:#313131"></div>
<div class="a" style="left:2621px;top:1560px;width:15px;height:1px;background:#4a4a4a"></div>
<div class="a" style="left:2655px;top:1548px;width:312px;height:16px;border-radius:8px;background:#2f2f2f"></div>
<svg style="left:2660px;top:1547px" width="10" height="22" viewBox="0 0 10 22"><path d="M1.5 0 H8.5 a1.5 1.5 0 0 1 1.5 1.5 V16 L5 21.5 L0 16 V1.5 A1.5 1.5 0 0 1 1.5 0Z" fill="#6d6969"/></svg>
<div class="a" style="left:2680px;top:1570px;width:2px;height:6px;background:#1c1c1c"></div>
<div class="a" style="left:2716px;top:1570px;width:2px;height:6px;background:#1c1c1c"></div>
<div class="a" style="left:2766px;top:1570px;width:2px;height:6px;background:#1c1c1c"></div>
<div class="a" style="left:2782px;top:1570px;width:2px;height:6px;background:#1c1c1c"></div>
<div class="a" style="left:2814px;top:1570px;width:2px;height:6px;background:#1c1c1c"></div>
<div class="a" style="left:2848px;top:1570px;width:2px;height:6px;background:#1c1c1c"></div>
<div class="a" style="left:2890px;top:1570px;width:2px;height:6px;background:#1c1c1c"></div>
<div class="a" style="left:2906px;top:1570px;width:2px;height:6px;background:#1c1c1c"></div>
<div class="a" style="left:2924px;top:1570px;width:2px;height:6px;background:#1c1c1c"></div>
<div class="a" style="left:2977px;top:1544px;width:30px;height:32px;border-radius:5px;background:#313131"></div>
<div class="a" style="left:2985px;top:1560px;width:15px;height:1px;background:#4a4a4a"></div><div class="a" style="left:2992px;top:1553px;width:1px;height:15px;background:#4a4a4a"></div>
<div class="a" style="left:3023px;top:1540px;width:84px;height:38px;border-radius:5px;background:#333333"></div>
<div class="t" style="left:3029px;top:1540px;height:38px;line-height:39px;font-size:23px;color:#858585;word-spacing:-1px">25 %</div>
<div id="dlgsh"></div><div id="dlg"><div id="dpg">
<div class="a" style="left:402px;top:369px;width:2145px;height:57px;background:#373737"></div>
<div class="a" style="left:402px;top:425px;width:2145px;height:2px;background:#2a2a2a"></div>
<div class="a" style="left:418px;top:385px;width:24px;height:24px;border-radius:50%;background:#ed6a2f"></div>
<div class="a" style="left:458px;top:385px;width:24px;height:24px;border-radius:50%;background:#fdb743"></div>
<div class="a" style="left:498px;top:385px;width:24px;height:24px;border-radius:50%;background:#3fd13a"></div>
<div class="t" style="left:402px;top:369px;width:2145px;height:56px;line-height:58px;text-align:center;font-size:22px;color:#dadada;letter-spacing:.3px">新建文档</div>
<div class="a" style="left:402px;top:427px;width:145px;height:1297px;background:#373737"></div>
<div class="a" style="left:547px;top:427px;width:2px;height:1297px;background:#2a2a2a"></div>
<div class="a" style="left:549px;top:427px;width:518px;height:1177px;background:#313131"></div>
<div class="a" style="left:549px;top:493px;width:518px;height:2px;background:#2b2b2b"></div>
<div class="a" style="left:549px;top:561px;width:518px;height:975px;background:#1c1c1c"></div>
<div class="a" style="left:1067px;top:427px;width:2px;height:1177px;background:#2a2a2a"></div>
<div class="a" style="left:1069px;top:427px;width:1478px;height:789px;background:#353535"></div>
<div class="a" style="left:1069px;top:1216px;width:1478px;height:2px;background:#2a2a2a"></div>
<div class="a" style="left:1069px;top:1218px;width:1086px;height:386px;background:#353535"></div>
<div class="a" style="left:2155px;top:1218px;width:2px;height:386px;background:#2a2a2a"></div>
<div class="a" style="left:2157px;top:1218px;width:390px;height:386px;background:#2f2f2f"></div>
<div class="a" style="left:2157px;top:1278px;width:390px;height:2px;background:#272727"></div>
<div class="a" style="left:549px;top:1604px;width:1998px;height:2px;background:#2a2a2a"></div>
<div class="a" style="left:549px;top:1606px;width:1998px;height:118px;background:#353535"></div>
<svg style="left:450px;top:469px" width="48" height="48" viewBox="0 0 48 48" fill="none" stroke="#9a9a9a" stroke-width="1.8">
<circle cx="24" cy="24" r="23"/><circle cx="24" cy="18.500" r="8.400"/><path d="M9 37.500 C10.500 30.500 17 26.800 24 26.800 C31 26.800 37.500 30.500 39 37.500"/></svg>
<div class="sbl" style="top:528px">帐户</div>
<div class="a" style="left:414px;top:595px;width:120px;height:112px;background:#545454;border-radius:7px"></div>
<svg style="left:454px;top:613px" width="41" height="48" viewBox="0 0 41 48" fill="none" stroke="#f0f0f0" stroke-width="2">
<path d="M1 1 H27 L40 14 V47 H1Z"/><path d="M27 1 V14 H40"/><path d="M26 25.5 V39.5 M19 32.500 H33" stroke-width="1.8"/></svg>
<div class="sbl" style="top:671px;color:#ececec">新建</div>
<svg style="left:450px;top:760px" width="48" height="42" viewBox="0 0 48 42" fill="none" stroke="#9a9a9a" stroke-width="1.8">
<path d="M1 1 H33"/><path d="M3 6 H28"/><path d="M1 11 V39 a2 2 0 0 0 2 2 H45 a2 2 0 0 0 2 -2 V8 a2 2 0 0 0 -2 -2 H33 L27 11Z"/></svg>
<div class="sbl" style="top:816px">打开</div>
<svg style="left:450px;top:901px" width="48" height="48" viewBox="0 0 48 48" fill="none" stroke="#9a9a9a" stroke-width="1.8">
<path d="M6.5 9.5 A23 23 0 1 1 1.5 20"/><path d="M3 3.5 L6 10 L12.5 8.5"/><circle cx="25" cy="24" r="15"/><path d="M25 15.5 V25 H32"/></svg>
<div class="sbl" style="top:960px">最近</div>
<svg style="left:454px;top:1044px" width="45" height="49" viewBox="0 0 45 49" fill="none" stroke="#9a9a9a" stroke-width="1.8">
<rect x="1" y="1" width="35" height="39" rx="2"/><path d="M40 8 H42 a2 2 0 0 1 2 2 V46 a2 2 0 0 1 -2 2 H10 a2 2 0 0 1 -2 -2 V44.500"/>
<rect x="7" y="8.5" width="22" height="9"/><path d="M7 24 H26 M7 31 H19"/></svg>
<div class="sbl" style="top:1104px">模板</div>
<svg style="left:450px;top:1189px" width="48" height="47" viewBox="0 0 48 47" fill="none" stroke="#9a9a9a" stroke-width="1.8">
<rect x="1" y="1" width="46" height="38" rx="1.5"/><path d="M5 45.500 H43"/><path d="M6 30 L17 17 L27 30 M22 23.5 L29 16 L42 32"/><circle cx="37" cy="11" r="3.8"/></svg>
<div class="sbl" style="top:1248px">示例</div>
<div class="a" style="left:561px;top:440px;width:490px;height:42px;background:#1e1e1e;border-radius:5px"></div>
<svg style="left:574px;top:452px" width="20" height="20" viewBox="0 0 20 20" fill="none" stroke="#d2d2d2" stroke-width="1.500"><circle cx="7.700" cy="7.700" r="6.700"/><path d="M12.500 12.500 L18.500 18"/></svg>
<div class="a" style="left:559px;top:504px;width:192px;height:46px;background:#484848;border-radius:6px"></div>
<div class="t" style="left:569px;top:504px;height:46px;line-height:46px;font-size:22.5px;color:#e4e4e4;letter-spacing:.4px">Web</div>
<svg style="left:729.0px;top:517.5px" width="10" height="19.0" viewBox="0 0 10 19.0" fill="none" stroke="#c8c8c8" stroke-width="1.5"><path d="M0.8 6 L5.0 0.8 L9.2 6"/><path d="M0.8 13.0 L5.0 18.2 L9.2 13.0"/></svg>
<svg style="left:769px;top:513px" width="26" height="24" viewBox="0 0 24 22" preserveAspectRatio="none" fill="none" stroke="#a0a0a0" stroke-width="1.5"><path d="M12 21 C5 15.5 1 11.5 1 7 C1 3.5 3.6 1 6.6 1 C9 1 11 2.5 12 4.8 C13 2.5 15 1 17.4 1 C20.4 1 23 3.5 23 7 C23 11.5 19 15.5 12 21Z"/></svg>
<div class="a" style="left:941px;top:509px;width:52px;height:40px;background:#484848;border-radius:6px 0 0 6px"></div>
<div class="a" style="left:993px;top:509px;width:54px;height:40px;background:#1e1e1e;border-radius:0 6px 6px 0"></div>
<svg style="left:957px;top:516px" width="21" height="27" viewBox="0 0 21 27" fill="none" stroke="#c8c8c8" stroke-width="1.6"><path d="M1 1 H12.5 L20 8.5 V26 H1Z"/><path d="M12.5 1 V8.500 H20"/></svg>
<svg style="left:1008px;top:519px" width="28" height="20" viewBox="0 0 28 20" fill="none" stroke="#d8d8d8" stroke-width="1.6"><path d="M1 8.500 L8.500 1 H27 V19 H1Z"/><path d="M1 8.500 H8.500 V1"/></svg>
<div class="row" style="top:565px;background:#35506f"></div>
<svg style="left:560px;top:579px" width="33" height="33" viewBox="0 0 33 33" fill="none" stroke="#aca8a4" stroke-width="1.700" stroke-linejoin="round"><path d="M3.200 19.500 V1.400 H29.800 V19.500"/><path d="M3.200 19.500 H29.800 L31.600 29.800 a1.500 1.500 0 0 1 -1.500 1.700 H2.900 a1.500 1.500 0 0 1 -1.500 -1.700 Z"/><path d="M7 25 H26"/></svg>
<div class="rl" style="top:565px">FHD 1080p</div>
<div class="rd" style="top:565px">1920 px × 1080 px</div>
<svg style="left:1037px;top:586px" width="18" height="18" viewBox="0 0 24 22" preserveAspectRatio="none" fill="none" stroke="#8e8a86" stroke-width="1.4"><path d="M12 21 C5 15.5 1 11.5 1 7 C1 3.5 3.6 1 6.6 1 C9 1 11 2.5 12 4.8 C13 2.5 15 1 17.4 1 C20.4 1 23 3.5 23 7 C23 11.5 19 15.5 12 21Z"/></svg>
<svg style="left:560px;top:643px" width="33" height="33" viewBox="0 0 33 33" fill="none" stroke="#9c9c9c" stroke-width="1.700" stroke-linejoin="round"><path d="M3.200 19.500 V1.400 H29.800 V19.500"/><path d="M3.200 19.500 H29.800 L31.600 29.800 a1.500 1.500 0 0 1 -1.500 1.700 H2.900 a1.500 1.500 0 0 1 -1.500 -1.700 Z"/><path d="M7 25 H26"/></svg>
<div class="rl" style="top:629px">WQHD</div>
<div class="rd" style="top:629px">2560 px × 1440 px</div>
<svg style="left:1037px;top:650px" width="18" height="18" viewBox="0 0 24 22" preserveAspectRatio="none" fill="none" stroke="#8e8a86" stroke-width="1.4"><path d="M12 21 C5 15.5 1 11.5 1 7 C1 3.5 3.6 1 6.6 1 C9 1 11 2.5 12 4.8 C13 2.5 15 1 17.4 1 C20.4 1 23 3.5 23 7 C23 11.5 19 15.5 12 21Z"/></svg>
<div class="row rowalt" style="top:693px"></div>
<svg style="left:560px;top:707px" width="33" height="33" viewBox="0 0 33 33" fill="none" stroke="#9c9c9c" stroke-width="1.700" stroke-linejoin="round"><path d="M3.200 19.500 V1.400 H29.800 V19.500"/><path d="M3.200 19.500 H29.800 L31.600 29.800 a1.500 1.500 0 0 1 -1.500 1.700 H2.900 a1.500 1.500 0 0 1 -1.500 -1.700 Z"/><path d="M7 25 H26"/></svg>
<div class="rl" style="top:693px">QFHD</div>
<div class="rd" style="top:693px">3840 px × 2160 px</div>
<svg style="left:1037px;top:714px" width="18" height="18" viewBox="0 0 24 22" preserveAspectRatio="none" fill="none" stroke="#8e8a86" stroke-width="1.4"><path d="M12 21 C5 15.5 1 11.5 1 7 C1 3.5 3.6 1 6.6 1 C9 1 11 2.5 12 4.8 C13 2.5 15 1 17.4 1 C20.4 1 23 3.5 23 7 C23 11.5 19 15.5 12 21Z"/></svg>
<svg style="left:560px;top:771px" width="33" height="33" viewBox="0 0 33 33" fill="none" stroke="#9c9c9c" stroke-width="1.700" stroke-linejoin="round"><path d="M3.200 19.500 V1.400 H29.800 V19.500"/><path d="M3.200 19.500 H29.800 L31.600 29.800 a1.500 1.500 0 0 1 -1.500 1.700 H2.900 a1.500 1.500 0 0 1 -1.500 -1.700 Z"/><path d="M7 25 H26"/></svg>
<div class="rl" style="top:757px;letter-spacing:.2px">Social Media Square P...</div>
<div class="rd" style="top:757px">1080 px × 1080 px</div>
<svg style="left:1037px;top:778px" width="18" height="18" viewBox="0 0 24 22" preserveAspectRatio="none" fill="none" stroke="#8e8a86" stroke-width="1.4"><path d="M12 21 C5 15.5 1 11.5 1 7 C1 3.5 3.6 1 6.6 1 C9 1 11 2.5 12 4.8 C13 2.5 15 1 17.4 1 C20.4 1 23 3.5 23 7 C23 11.5 19 15.5 12 21Z"/></svg>
<div class="row rowalt" style="top:821px"></div>
<svg style="left:560px;top:835px" width="33" height="33" viewBox="0 0 33 33" fill="none" stroke="#9c9c9c" stroke-width="1.700" stroke-linejoin="round"><path d="M3.200 19.500 V1.400 H29.800 V19.500"/><path d="M3.200 19.500 H29.800 L31.600 29.800 a1.500 1.500 0 0 1 -1.500 1.700 H2.900 a1.500 1.500 0 0 1 -1.500 -1.700 Z"/><path d="M7 25 H26"/></svg>
<div class="rl" style="top:821px">Social Media Story Post</div>
<div class="rd" style="top:821px">1920 px × 1080 px</div>
<svg style="left:1037px;top:842px" width="18" height="18" viewBox="0 0 24 22" preserveAspectRatio="none" fill="none" stroke="#8e8a86" stroke-width="1.4"><path d="M12 21 C5 15.5 1 11.5 1 7 C1 3.5 3.6 1 6.6 1 C9 1 11 2.5 12 4.8 C13 2.5 15 1 17.4 1 C20.4 1 23 3.5 23 7 C23 11.5 19 15.5 12 21Z"/></svg>
<svg style="left:560px;top:899px" width="33" height="33" viewBox="0 0 33 33" fill="none" stroke="#9c9c9c" stroke-width="1.700" stroke-linejoin="round"><path d="M3.200 19.500 V1.400 H29.800 V19.500"/><path d="M3.200 19.500 H29.800 L31.600 29.800 a1.500 1.500 0 0 1 -1.500 1.700 H2.900 a1.500 1.500 0 0 1 -1.500 -1.700 Z"/><path d="M7 25 H26"/></svg>
<div class="rl" style="top:885px;letter-spacing:.2px">Social Media Portrait P...</div>
<div class="rd" style="top:885px">1350 px × 1080 px</div>
<svg style="left:1037px;top:906px" width="18" height="18" viewBox="0 0 24 22" preserveAspectRatio="none" fill="none" stroke="#8e8a86" stroke-width="1.4"><path d="M12 21 C5 15.5 1 11.5 1 7 C1 3.5 3.6 1 6.6 1 C9 1 11 2.5 12 4.8 C13 2.5 15 1 17.4 1 C20.4 1 23 3.5 23 7 C23 11.5 19 15.5 12 21Z"/></svg>
<div class="a" style="left:552px;top:949px;width:510px;height:59px;background:#272727"></div>
<div class="t" style="left:564px;top:949px;height:59px;line-height:60px;font-size:24.500px;color:#e0e0e0;letter-spacing:.3px">Devices</div>
<div class="ham" style="left:1030px;top:969px"><i style="top:0"></i><i style="top:8px"></i><i style="top:16px"></i></div>
<div class="a" style="left:560px;top:1030px;width:32px;height:26px;border:2.4px solid #9c9c9c;border-radius:2px"></div>
<div class="rl" style="top:1013px">iPad Mini</div>
<div class="rd" style="top:1013px;letter-spacing:.5px">1024 pt × 768 pt</div>
<svg style="left:1037px;top:1034px" width="18" height="18" viewBox="0 0 24 22" preserveAspectRatio="none" fill="none" stroke="#8e8a86" stroke-width="1.4"><path d="M12 21 C5 15.5 1 11.5 1 7 C1 3.5 3.6 1 6.6 1 C9 1 11 2.5 12 4.8 C13 2.5 15 1 17.4 1 C20.4 1 23 3.5 23 7 C23 11.5 19 15.5 12 21Z"/></svg>
<div class="row rowalt" style="top:1077px"></div>
<div class="a" style="left:560px;top:1094px;width:32px;height:26px;border:2.4px solid #9c9c9c;border-radius:2px"></div>
<div class="rl" style="top:1077px">iPad 9.7&quot;</div>
<div class="rd" style="top:1077px;letter-spacing:.5px">1024 pt × 768 pt</div>
<svg style="left:1037px;top:1098px" width="18" height="18" viewBox="0 0 24 22" preserveAspectRatio="none" fill="none" stroke="#8e8a86" stroke-width="1.4"><path d="M12 21 C5 15.5 1 11.5 1 7 C1 3.5 3.6 1 6.6 1 C9 1 11 2.5 12 4.8 C13 2.5 15 1 17.4 1 C20.4 1 23 3.5 23 7 C23 11.5 19 15.5 12 21Z"/></svg>
<div class="a" style="left:560px;top:1158px;width:32px;height:26px;border:2.4px solid #9c9c9c;border-radius:2px"></div>
<div class="rl" style="top:1141px">iPad 10.5&quot;</div>
<div class="rd" style="top:1141px;letter-spacing:.5px">1112 pt × 834 pt</div>
<svg style="left:1037px;top:1162px" width="18" height="18" viewBox="0 0 24 22" preserveAspectRatio="none" fill="none" stroke="#8e8a86" stroke-width="1.4"><path d="M12 21 C5 15.5 1 11.5 1 7 C1 3.5 3.6 1 6.6 1 C9 1 11 2.5 12 4.8 C13 2.5 15 1 17.4 1 C20.4 1 23 3.5 23 7 C23 11.5 19 15.5 12 21Z"/></svg>
<div class="row rowalt" style="top:1205px"></div>
<div class="a" style="left:560px;top:1222px;width:32px;height:26px;border:2.4px solid #9c9c9c;border-radius:2px"></div>
<div class="rl" style="top:1205px">iPad 11&quot;</div>
<div class="rd" style="top:1205px;letter-spacing:.5px">1194 pt × 834 pt</div>
<svg style="left:1037px;top:1226px" width="18" height="18" viewBox="0 0 24 22" preserveAspectRatio="none" fill="none" stroke="#8e8a86" stroke-width="1.4"><path d="M12 21 C5 15.5 1 11.5 1 7 C1 3.5 3.6 1 6.6 1 C9 1 11 2.5 12 4.8 C13 2.5 15 1 17.4 1 C20.4 1 23 3.5 23 7 C23 11.5 19 15.5 12 21Z"/></svg>
<div class="a" style="left:560px;top:1286px;width:32px;height:26px;border:2.4px solid #9c9c9c;border-radius:2px"></div>
<div class="rl" style="top:1269px">iPad 12.9&quot;</div>
<div class="rd" style="top:1269px;letter-spacing:.5px">1366 pt × 1024 pt</div>
<svg style="left:1037px;top:1290px" width="18" height="18" viewBox="0 0 24 22" preserveAspectRatio="none" fill="none" stroke="#8e8a86" stroke-width="1.4"><path d="M12 21 C5 15.5 1 11.5 1 7 C1 3.5 3.6 1 6.6 1 C9 1 11 2.5 12 4.8 C13 2.5 15 1 17.4 1 C20.4 1 23 3.5 23 7 C23 11.5 19 15.5 12 21Z"/></svg>
<div class="row rowalt" style="top:1333px"></div>
<div class="a" style="left:560px;top:1353px;width:32px;height:21px;border:2.4px solid #9c9c9c;border-radius:4px"></div>
<div class="rl" style="top:1333px">iPhone 6/7/8</div>
<div class="rd" style="top:1333px;letter-spacing:.5px">667 pt × 375 pt</div>
<svg style="left:1037px;top:1354px" width="18" height="18" viewBox="0 0 24 22" preserveAspectRatio="none" fill="none" stroke="#8e8a86" stroke-width="1.4"><path d="M12 21 C5 15.5 1 11.5 1 7 C1 3.5 3.6 1 6.6 1 C9 1 11 2.5 12 4.8 C13 2.5 15 1 17.4 1 C20.4 1 23 3.5 23 7 C23 11.5 19 15.5 12 21Z"/></svg>
<div class="a" style="left:560px;top:1417px;width:32px;height:21px;border:2.4px solid #9c9c9c;border-radius:4px"></div>
<div class="rl" style="top:1397px">iPhone 6/7/8 Plus</div>
<div class="rd" style="top:1397px;letter-spacing:.5px">736 pt × 414 pt</div>
<svg style="left:1037px;top:1418px" width="18" height="18" viewBox="0 0 24 22" preserveAspectRatio="none" fill="none" stroke="#8e8a86" stroke-width="1.4"><path d="M12 21 C5 15.5 1 11.5 1 7 C1 3.5 3.6 1 6.6 1 C9 1 11 2.5 12 4.8 C13 2.5 15 1 17.4 1 C20.4 1 23 3.5 23 7 C23 11.5 19 15.5 12 21Z"/></svg>
<div class="row rowalt" style="top:1461px"></div>
<div class="a" style="left:560px;top:1481px;width:32px;height:21px;border:2.4px solid #9c9c9c;border-radius:4px"></div>
<div class="rl" style="top:1461px">iPhone X/XS</div>
<div class="rd" style="top:1461px;letter-spacing:.5px">812 pt × 375 pt</div>
<svg style="left:1037px;top:1482px" width="18" height="18" viewBox="0 0 24 22" preserveAspectRatio="none" fill="none" stroke="#8e8a86" stroke-width="1.4"><path d="M12 21 C5 15.5 1 11.5 1 7 C1 3.5 3.6 1 6.6 1 C9 1 11 2.5 12 4.8 C13 2.5 15 1 17.4 1 C20.4 1 23 3.5 23 7 C23 11.5 19 15.5 12 21Z"/></svg>
<svg style="left:568px;top:1555px" width="27" height="32" viewBox="0 0 27 32" fill="none" stroke="#a2a2a2" stroke-width="1.7">
<rect x="1" y="1" width="25" height="30" rx="1.5"/><path d="M4 5 H23 M4 8.500 H23"/><path d="M13.5 13.5 V25.5 M7.5 19.5 H19.5"/></svg>
<svg style="left:607px;top:1557px" width="34" height="30" viewBox="0 0 34 30" fill="none" stroke="#a2a2a2" stroke-width="1.7">
<path d="M6 0 V10 M1 5 H11"/><path d="M6 13 V23 a3 3 0 0 0 3 3 H16"/><path d="M6 18.500 H16" /><rect x="19.5" y="15.500" width="13.5" height="5.5" rx="1.2" fill="#a2a2a2" stroke="none"/><rect x="19.5" y="23.500" width="13.5" height="5.5" rx="1.2" fill="#a2a2a2" stroke="none"/></svg>
<svg style="left:973px;top:1553px" width="30" height="33" viewBox="0 0 30 33" fill="none" stroke="#a2a2a2" stroke-width="1.7">
<path d="M0 31.500 H22"/><path d="M4 27 L10.5 12 L17 27 M6.3 22 H14.700"/><path d="M13 3.500 L18.500 1 L29 25 L27.500 30 L23.500 27.500Z"/><path d="M14.500 7 L20 4.500"/></svg>
<svg style="left:1020px;top:1553px" width="24" height="32" viewBox="0 0 24 32" fill="none" stroke="#a2a2a2" stroke-width="1.8"><path d="M0 6.5 H24"/><path d="M7 6 V2.5 a1.5 1.5 0 0 1 1.5 -1.5 H15.5 a1.5 1.5 0 0 1 1.5 1.5 V6"/><path d="M3 6.5 V29 a2 2 0 0 0 2 2 H19 a2 2 0 0 0 2 -2 V6.5"/><path d="M9 11 V26 M15 11 V26" stroke-width="2.4"/></svg>
<div class="t" style="left:1692px;top:469px;height:50px;line-height:50px;font-size:45px;color:#cfd1cf;letter-spacing:-1.1px">FHD 1080p</div>
<div class="a" style="left:1531px;top:667px;width:554px;height:310px;background:#ffffff;border:2px solid #1c1ce0"></div>
<svg style="left:1735px;top:767px" width="146" height="110" viewBox="0 0 146 110">
<rect x="0.500" y="0.500" width="145" height="109" rx="6" fill="#e0e0e0" stroke="#c4c8c8"/>
<circle cx="112" cy="29" r="14" fill="#fff"/>
<path d="M17 45 a4 4 0 0 1 0 -8 h8.500 a10 10 0 0 1 12.500 -7.500 a14.400 14.400 0 0 1 28.500 1 a9 9 0 0 1 10 6.500 h4 a4 4 0 0 1 0 8 Z" fill="#fff"/>
<path d="M8.500 67 C8.500 62 15 61 24 62 C48 65 68 83 90 83 C108 83 122 63 134 62.500 C137 62.500 137.500 64.500 137.500 67 V96 a5 5 0 0 1 -5 5 H13.500 a5 5 0 0 1 -5 -5Z" fill="#fff"/></svg>
<div class="a" style="left:1374px;top:1244px;width:156px;height:40px;background:#1e1e1e;border-radius:6px 0 0 6px"></div>
<div class="a" style="left:1532px;top:1244px;width:156px;height:40px;background:#474747"></div>
<div class="a" style="left:1690px;top:1244px;width:156px;height:40px;background:#474747;border-radius:0 6px 6px 0"></div>
<div class="seg" style="left:1374px;color:#f0f0f0">布局</div><div class="seg" style="left:1532px">颜色</div><div class="seg" style="left:1690px">边界</div>
<div class="fl" style="right:2116px;top:1326px">页面宽度:</div>
<div class="inp" style="top:1326px"></div><div class="it" style="top:1326px">1920 px</div>
<div class="fl" style="right:2116px;top:1378px">页面高度:</div>
<div class="inp" style="top:1378px"></div><div class="it" style="top:1378px">1080 px</div>
<div class="fl" style="right:2116px;top:1430px">DPI:</div>
<div class="inp" style="top:1430px"></div><div class="it" style="top:1430px">72</div>
<div class="a" style="left:1413px;top:1430px;width:2px;height:40px;background:#353535"></div>
<svg style="left:1422.25px;top:1446.25px" width="9.5" height="7.5" viewBox="0 0 9.5 7.5" fill="none" stroke="#d0d0d0" stroke-width="1.4"><path d="M0.8 0.8 L4.75 6.7 L8.7 0.8"/></svg>
<div class="fl" style="right:1678px;top:1326px">文档单元:</div>
<div class="dd" style="top:1322px;width:88px"></div><div class="ddt" style="top:1322px">像素</div>
<svg style="left:1820.0px;top:1336.5px" width="10" height="19.0" viewBox="0 0 10 19.0" fill="none" stroke="#c8c8c8" stroke-width="1.4"><path d="M0.8 6 L5.0 0.8 L9.2 6"/><path d="M0.8 13.0 L5.0 18.2 L9.2 13.0"/></svg>
<div class="fl" style="right:1678px;top:1378px">&quot;实际大小&quot;缩放:</div>
<div class="dd" style="top:1374px;width:322px"></div><div class="ddt" style="top:1374px">默认值</div>
<svg style="left:2054.0px;top:1388.5px" width="10" height="19.0" viewBox="0 0 10 19.0" fill="none" stroke="#c8c8c8" stroke-width="1.4"><path d="M0.8 6 L5.0 0.8 L9.2 6"/><path d="M0.8 13.0 L5.0 18.2 L9.2 13.0"/></svg>
<div class="fl" style="right:1678px;top:1430px">图像放置:</div>
<div class="dd" style="top:1426px;width:134px"></div><div class="ddt" style="top:1426px">首选嵌入</div>
<svg style="left:1866.0px;top:1440.5px" width="10" height="19.0" viewBox="0 0 10 19.0" fill="none" stroke="#c8c8c8" stroke-width="1.4"><path d="M0.8 6 L5.0 0.8 L9.2 6"/><path d="M0.8 13.0 L5.0 18.2 L9.2 13.0"/></svg>
<div class="t" style="left:2194px;top:1229px;height:32px;line-height:32px;font-size:22px;color:#c6c6c6;letter-spacing:.4px">文档摘要</div>
<div class="sm" style="top:1310px">FHD 1080p</div>
<div class="sm" style="top:1358px">大小: 1920 px x 1080 px</div>
<div class="sm" style="top:1406px">DPI:&nbsp; 72</div>
<div class="sm" style="top:1454px">颜色: RGB 8 位</div>
<div class="sm" style="top:1502px">颜色配置文件:</div>
<div class="sm" style="top:1528px">sRGB IEC61966-2.1</div>
<div class="a" style="left:2350px;top:1459px;width:18px;height:18px;background:#d8482b"></div>
<div class="a" style="left:2370px;top:1459px;width:18px;height:18px;background:#3fd83f"></div>
<div class="a" style="left:2390px;top:1459px;width:18px;height:18px;background:#0808f0"></div>
<div class="a" style="left:587px;top:1648px;width:28px;height:28px;background:#1e1e1e;border-radius:6px"></div>
<svg style="left:593px;top:1655px" width="17" height="14" viewBox="0 0 17 14" fill="none" stroke="#fff" stroke-width="2"><path d="M1.5 7.500 L6 12 L15.500 1.5"/></svg>
<div class="t" style="left:626px;top:1648px;height:32px;line-height:32px;font-size:22px;color:#cacaca">启动时显示</div>
<div class="btn" style="left:2117px">取消</div><div class="btn" style="left:2327px">创建</div>
</div></div><div id="dlgbd"></div>
</div></div>
</div>
</body></html>
